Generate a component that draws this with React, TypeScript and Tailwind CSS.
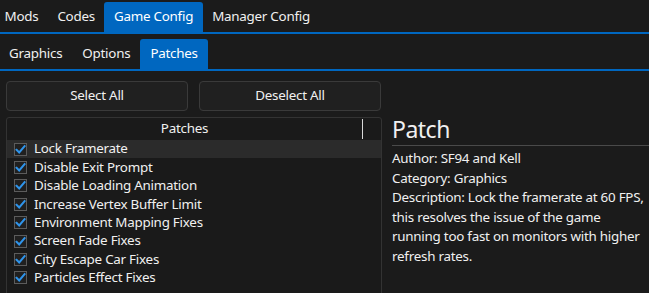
import { useState } from 'react';

const mainTabs = ['Mods', 'Codes', 'Game Config', 'Manager Config'];
const subTabs = ['Graphics', 'Options', 'Patches'];

const patches = [
  'Lock Framerate',
  'Disable Exit Prompt',
  'Disable Loading Animation',
  'Increase Vertex Buffer Limit',
  'Environment Mapping Fixes',
  'Screen Fade Fixes',
  'City Escape Car Fixes',
  'Particles Effect Fixes',
];

const Check = ({ on }: { on: boolean }) => (
  <span className="w-[13px] h-[13px] border border-[#5c5c5c] bg-[#202020] flex items-center justify-center shrink-0">
    {on && (
      <svg width="11" height="11" viewBox="0 0 11 11">
        <path d="M1.5 5.8 L4.2 8.5 L9.6 2.2" fill="none" stroke="#2f95ec" strokeWidth="2" strokeLinecap="square" />
      </svg>
    )}
  </span>
);

const App = () => {
  const [checked, setChecked] = useState<boolean[]>(patches.map(() => true));
  const [selected, setSelected] = useState(0);

  return (
    <div className="w-[649px] h-[293px] bg-[#1b1b1b] text-[#f0f0f0] overflow-hidden text-[13.4px] tracking-[-0.25px] leading-none" style={{ fontFamily: '"Noto Sans", sans-serif' }}>
      {/* onglets principaux */}
      <div className="flex items-end h-[32px] -ml-[5px] border-b-2 border-[#0067c0] box-content">
        {mainTabs.map((t) => (
          <div key={t} className={`h-[30px] px-[9.5px] flex items-center rounded-t-[3px] ${t === 'Game Config' ? 'bg-[#0067c0] text-white' : ''}`}>
            {t}
          </div>
        ))}
      </div>

      {/* sous-onglets */}
      <div className="flex items-end h-[35px] -ml-[1px] border-b-2 border-[#0067c0] box-content">
        {subTabs.map((t) => (
          <div key={t} className={`h-[30px] px-[10px] flex items-center rounded-t-[3px] ${t === 'Patches' ? 'bg-[#0067c0] text-white' : ''}`}>
            {t}
          </div>
        ))}
      </div>

      <div className="flex">
        {/* colonne gauche */}
        <div className="w-[382px] pl-[6px] pt-[10px] flex flex-col">
          <div className="flex gap-[11px] pr-[1px]">
            <button className="flex-1 h-[30px] rounded-[4px] border border-[#3a3a3a] bg-[#202020] text-[#f0f0f0]">Select All</button>
            <button className="flex-1 h-[30px] rounded-[4px] border border-[#3a3a3a] bg-[#202020] text-[#f0f0f0]">Deselect All</button>
          </div>

          <div className="mt-[6px] h-[200px] border border-[#333333] rounded-t-[3px] bg-[#1a1a1a]">
            <div className="flex h-[22px]">
              <div className="w-[355px] flex items-center justify-center">Patches</div>
              <div className="w-px h-[20px] mt-px bg-[#d8d8d8]" />
            </div>
            <div className="flex flex-col">
              {patches.map((p, i) => (
                <div
                  key={p}
                  onClick={() => setSelected(i)}
                  className={`h-[18.4px] flex items-center gap-[7px] pl-[7px] ${i === selected ? 'bg-[#2b2b2b]' : ''}`}
                >
                  <span onClick={() => setChecked((c) => c.map((v, j) => (j === i ? !v : v)))}>
                    <Check on={checked[i]} />
                  </span>
                  <span>{p}</span>
                </div>
              ))}
            </div>
          </div>
        </div>

        {/* panneau de détail */}
        <div className="flex-1 pl-[10px] pt-[44px]">
          <div className="text-[23px] tracking-[-0.5px] leading-[28px] pb-[2px] border-b border-[#4a4a4a]">Patch</div>
          <div className="leading-[19.5px] pt-[3px] pr-[1px]">
            <div>Author: SF94 and Kell</div>
            <div>Category: Graphics</div>
            <div>Description: Lock the framerate at 60 FPS, this resolves the issue of the game running too fast on monitors with higher refresh rates.</div>
          </div>
        </div>
      </div>
    </div>
  );
};

export default App;
